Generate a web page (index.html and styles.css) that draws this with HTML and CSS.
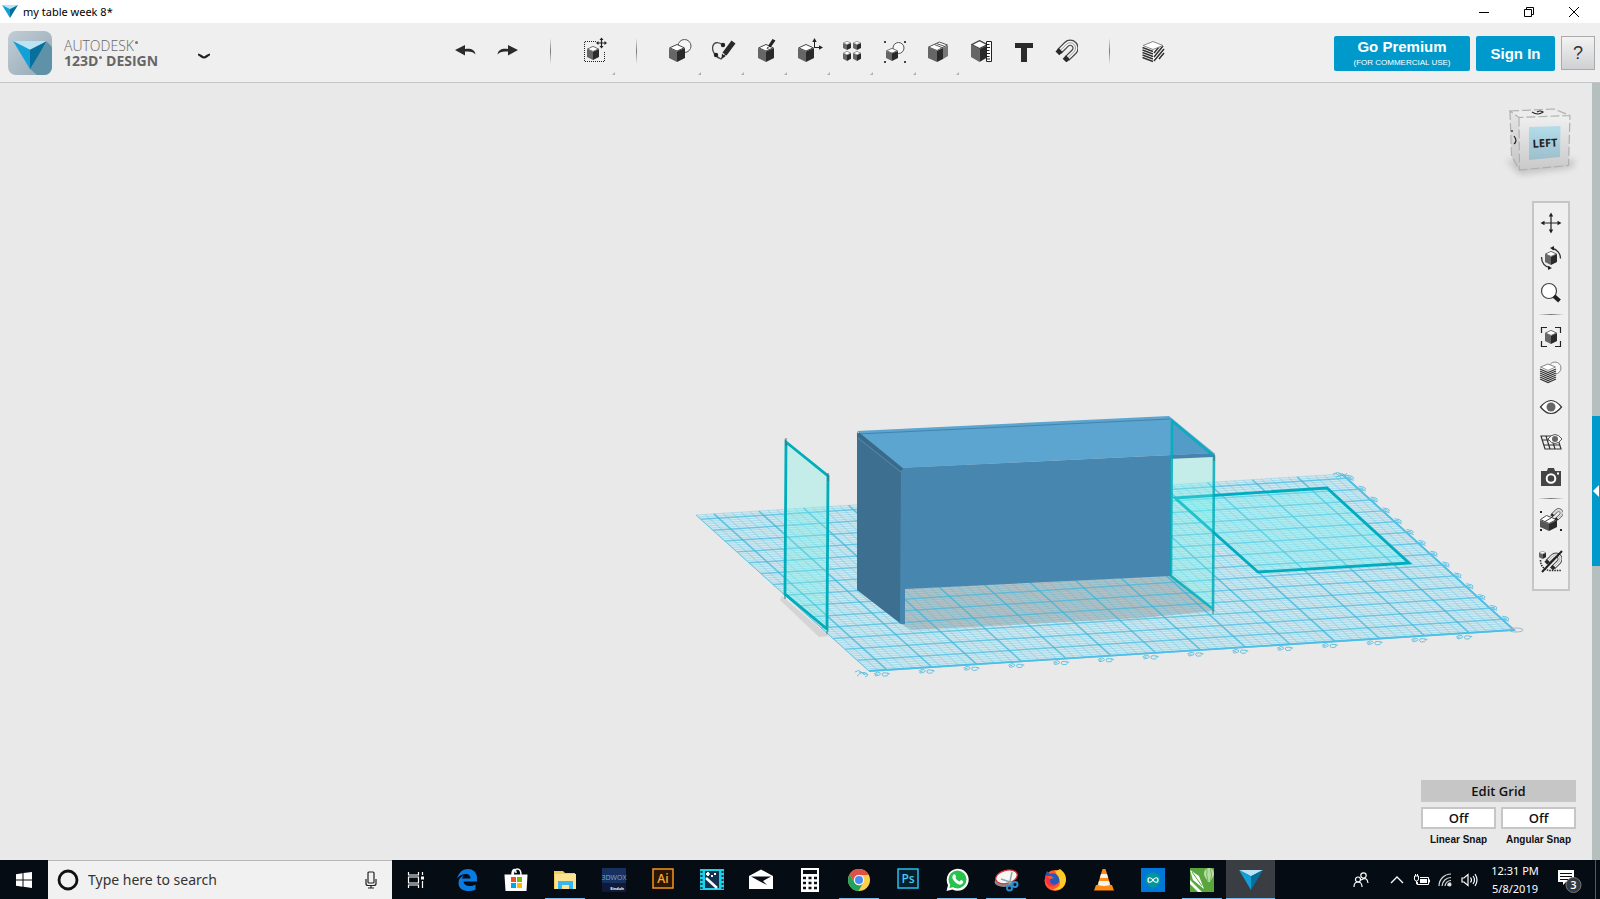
FILE: index.html
```html
<!DOCTYPE html>
<html lang="en">
<head>
<meta charset="utf-8">
<title>my table week 8*</title>
<link rel="stylesheet" href="styles.css">
</head>
<body>
<svg class="defs" aria-hidden="true">
  <defs>
    <symbol id="cube" viewBox="0 0 16 18" preserveAspectRatio="none">
      <path d="M0 4 8 7.400V18L0 14z" fill="#666"/>
      <path d="M16 4 8 7.400V18l8-4z" fill="#2a2a2a"/>
      <path d="M8 .5 15.300 3.800 8 7 .7 3.800z" fill="#fff" stroke="#444" stroke-width="1"/>
    </symbol>
    <symbol id="mark" viewBox="0 0 36 29" preserveAspectRatio="none">
      <path d="M0 0h36L18 9z" fill="#b9e4f5"/>
      <path d="M0 0 18 9v20z" fill="#12a0d8"/>
      <path d="M36 0 18 9v20z" fill="#05709c"/>
    </symbol>
    <symbol id="magnet" viewBox="0 0 24 24">
      <path d="M4.500 13 12 5.500a5.500 5.500 0 0 1 7.800 7.800L12.500 20.500" fill="none" stroke="#444" stroke-width="6.500"/>
      <path d="M4.500 13 12 5.500a5.500 5.500 0 0 1 7.800 7.800L12.500 20.500" fill="none" stroke="#f4f4f4" stroke-width="4"/>
      <path d="M4.500 13 12 5.500a5.500 5.500 0 0 1 7.800 7.800L12.500 20.500" fill="none" stroke="#999" stroke-width="1"/>
      <path d="m4 9.500 4 4-3.500 3.500-4-4zM11.500 17l4 4-3.500 3.500-4-4z" fill="#2a2a2a"/>
    </symbol>
    <linearGradient id="tile" x1="0" y1="0" x2="1" y2="1"><stop offset="0" stop-color="#c2cdd6"/><stop offset="1" stop-color="#93a8b6"/></linearGradient>
    <linearGradient id="cubeface" x1="0" y1="0" x2="0" y2="1"><stop offset="0" stop-color="#f0f0f0"/><stop offset="1" stop-color="#c9c9c9"/></linearGradient>
    <linearGradient id="cubeleft" x1="0" y1="0" x2="0" y2="1"><stop offset="0" stop-color="#e6e6e6"/><stop offset="1" stop-color="#c4c4c4"/></linearGradient>
    <linearGradient id="cubehot" x1="0" y1="0" x2="0" y2="1"><stop offset="0" stop-color="#b4dcea"/><stop offset="1" stop-color="#9cbfcb"/></linearGradient>
    <filter id="soft" x="-30%" y="-30%" width="160%" height="160%"><feGaussianBlur stdDeviation="3"/></filter>
  </defs>
</svg>

<header class="titlebar">
  <svg class="app-mark" width="16" height="13"><use href="#mark" width="16" height="13"/></svg>
  <h1>my table week 8*</h1>
  <div class="window-buttons">
    <button aria-label="Minimize"><svg width="12" height="12"><path d="M1 6.500h10" stroke="#000"/></svg></button>
    <button aria-label="Restore"><svg width="12" height="12" fill="none" stroke="#000"><path d="M1.500 3.500h7v7h-7zM3.500 3V1.500h7v7H9"/></svg></button>
    <button aria-label="Close"><svg width="12" height="12" stroke="#000"><path d="m1 1 10 10M11 1 1 11"/></svg></button>
  </div>
</header>

<div class="toolbar">
  <div class="brand">
    <svg width="44" height="44" viewBox="0 0 44 44"><rect width="44" height="44" rx="8" fill="url(#tile)"/><path d="M39 11 44 16v20a8 8 0 0 1-8 8h-7L21 37z" fill="#5f92a8"/><use href="#mark" x="5" y="10" width="34" height="28"/></svg>
    <div class="brand-name"><span>AUTODESK<i class="reg"></i></span><strong>123D<i class="reg"></i> DESIGN</strong></div>
    <button class="brand-menu" aria-label="Application menu"><svg width="14" height="7"><path d="M1 1.500c2 0 4 3 6 3s4-3 6-3" fill="none" stroke="#222" stroke-width="2.200"/></svg></button>
  </div>
  <nav class="tools" aria-label="Tools">
    <button aria-label="Undo"><svg width="32" height="32"><path d="M6 15l10-5v4c6-1 10 1 10.500 5.500-2-2.500-5-3.500-10.500-3v4z" fill="#2a2a2a"/></svg></button>
    <button aria-label="Redo"><svg width="32" height="32"><path d="M26 15l-10-5v4c-6-1-10 1-10.500 5.500 2-2.500 5-3.500 10.500-3v4z" fill="#2a2a2a"/></svg></button>
    <span class="divider"></span>
    <button class="more" aria-label="Transform"><svg width="32" height="32"><path d="M18 6.500H6.500v20h20V16" fill="none" stroke="#222" stroke-dasharray="1 1"/><use href="#cube" x="9" y="11" width="12" height="14"/><path d="M23.500 4v8M19.500 8h8" stroke="#222" stroke-width="1.200"/><path d="m23.500 2.500 2 2.500h-4zM23.500 13.500l2-2.500h-4zM18 8l2.500-2v4zM29 8l-2.500-2v4z" fill="#222"/></svg></button>
    <span class="divider"></span>
    <button class="more" aria-label="Primitives"><svg width="32" height="32"><circle cx="20.500" cy="11" r="6.500" fill="#f7f7f7" stroke="#555"/><use href="#cube" x="5" y="9" width="16" height="18"/></svg></button>
    <button class="more" aria-label="Sketch"><svg width="32" height="32"><path d="M16 10C11 6 6 7 5.500 13c0 4 3 9 8.500 11l8-8" fill="none" stroke="#444" stroke-width="1.300"/><circle cx="16" cy="10" r="2.200" fill="#222"/><circle cx="9" cy="20" r="2.200" fill="#222"/><path d="m24.500 5.500 4 3-9 12-4-3zM15 18.500l3.500 3-4 2z" fill="#2a2a2a"/></svg></button>
    <button class="more" aria-label="Construct"><svg width="32" height="32"><use href="#cube" x="8" y="9" width="16" height="18"/><path d="m22.500 4 3 1.500-5 7-2.500-1.500zM17.500 12l2 1-3 1z" fill="#222"/></svg></button>
    <button class="more" aria-label="Modify"><svg width="32" height="32"><use href="#cube" x="5" y="9" width="16" height="18"/><path d="M21.500 13V5M21 12.500h7" stroke="#222"/><path d="m21.500 3 2.200 4h-4.400zM30 12.500l-4-2.200v4.400z" fill="#222"/></svg></button>
    <button class="more" aria-label="Pattern"><svg width="32" height="32"><use href="#cube" x="7" y="6" width="8" height="9"/><use href="#cube" x="17" y="6" width="8" height="9"/><use href="#cube" x="7" y="16" width="8" height="10"/><use href="#cube" x="17" y="16" width="8" height="10"/></svg></button>
    <button class="more" aria-label="Grouping"><svg width="32" height="32"><path d="M5 6h2v2H5zM25 6h2v2h-2zM5 26h2v2H5zM25 26h2v2h-2z" fill="#444"/><circle cx="19.500" cy="13" r="5.500" fill="#f7f7f7" stroke="#555"/><use href="#cube" x="7" y="13" width="12" height="13"/></svg></button>
    <button class="more" aria-label="Combine"><svg width="32" height="32"><path d="M6 12 15 16v11l-9-4z" fill="#666"/><path d="M15 16 21 13v11l-6 3z" fill="#2a2a2a"/><path d="M21 13 26 10.500V21l-5 3z" fill="#777"/><path d="M6.500 12 17.500 7l8 3-10.500 5.500zM12.500 9.500 21 13M14.500 8.500 23 11.500" fill="#fff" stroke="#555"/></svg></button>
    <button aria-label="Measure"><svg width="32" height="32"><use href="#cube" x="6" y="5" width="17" height="22"/><path d="M21.500 6.500h5v20h-5z" fill="#fff" stroke="#222"/><path d="M22 9.500h2.500M22 12.500h3M22 15.500h2.500M22 18.500h3M22 21.500h2.500M22 24h3" stroke="#222"/></svg></button>
    <button aria-label="Text"><svg width="32" height="32"><path d="M7 8h18v5h-6v14h-6V13H7z" fill="#2a2a2a"/></svg></button>
    <button aria-label="Snap"><svg width="32" height="32"><use href="#magnet" x="4" y="4" width="23" height="23"/></svg></button>
    <span class="divider"></span>
    <button aria-label="Material"><svg width="32" height="32"><path d="M5.500 10.500 16 14.500V27L5.500 22zM26.500 10.500 16 14.500V27l10.500-5z" fill="#fff"/><path d="m5.500 12.500 10.500 4m-10.500-1.500 10.500 4m-10.500-1.500 10.500 4m-10.500-1.500 10.500 4m-10.500-1.500 10.500 4" stroke="#333" stroke-width="1.400"/><path d="m17 18 5-6m-5 10 9-11m-9 15 10-12m-5 10 5-6" stroke="#333" stroke-width="1.600"/><path d="m16 6.500 10 4-10 4-10-4z" fill="#fff" stroke="#888"/></svg></button>
  </nav>
  <div class="account">
    <button class="primary premium"><b>Go Premium</b><small>(FOR COMMERCIAL USE)</small></button>
    <button class="primary signin">Sign In</button>
    <button class="help" aria-label="Help">?</button>
  </div>
</div>

<main class="viewport">
  <svg class="scene" viewBox="0 83 1592 777" preserveAspectRatio="xMidYMid meet" role="img" aria-label="3D view of a table on the work grid">
    <path d="M696 515 1342 474 1514 630 869 671z" fill="#cbe7f0" fill-opacity=".85"/>
    <path d="M782 596 829 636 819 637 780 600z" fill="#999" fill-opacity=".25"/>
    <path d="M899 623 905 586 1171 575 1213 611 1140 618 912 630z" fill="#999" fill-opacity=".5"/>
    <g id="grid" fill="none" stroke="#35b4dc"></g>
    <path d="M696 515 869 671" stroke="#6cc6e4" stroke-width="1"/>
    <path d="M869 671 1514 630 1342 474" fill="none" stroke="#4dbfe6" stroke-width="1.800"/>
    <g id="labels" fill="none" stroke="#62c3e4" stroke-width="1"></g>
    <ellipse cx="1516" cy="630" rx="7" ry="2" fill="none" stroke="#9fb7c4"/>
    <path d="M1175 498 1327 488 1409 563 1258 572z" fill="#70f4f2" fill-opacity=".3" stroke="#00acc0" stroke-width="2.800"/>
    <path d="M857 432 901 468V624L857 590z" fill="#3d6f90"/>
    <path d="M901 468 1171 456V576L905 589V624H900z" fill="#4787af"/>
    <path d="M857 431 1169 416 1214 453 901 468z" fill="#5ba5d0"/>
    <path d="M901 468 1213 453V457L901 471z" fill="#4787af"/>
    <path d="M858 434 1170 419" stroke="#4384ad" stroke-width="1"/>
    <path d="M858 434 902 470" stroke="#396a8a" stroke-width="4"/>
    <path d="M858 438 901 472" stroke="#6395b3" stroke-width=".7"/>
    <path d="M1171 459 1213 457V610L1171 576z" fill="#70f4e8" fill-opacity=".3"/>
    <path d="M1172 421 1213 455V457L1172 459z" fill="#3a7aa8" fill-opacity=".2"/>
    <path d="M1172 421 1214 456 1213 609 1171 576z" fill="none" stroke="#00adba" stroke-opacity=".85" stroke-width="2.600"/>
    <path d="M786 442 828 476 827 629 785 594z" fill="#70f4e8" fill-opacity=".3" stroke="#00adba" stroke-width="2.800"/>
    <path d="M786 438v8M828 473v8M785 595v4M827 631v3M1214 453v8M1213 610v4" stroke="#4c6b70" stroke-width="1"/>
  </svg>

  <svg class="view-cube" width="90" height="90" viewBox="1495 98 90 90" role="img" aria-label="View cube">
    <path d="M1506 160 1520 175 1572 168 1576 160z" fill="#999" opacity=".45" filter="url(#soft)"/>
    <path d="M1510 111 1519 117.500 1519.500 170 1511.500 156z" fill="url(#cubeleft)"/>
    <path d="M1510 111 1554 109 1570 115.500 1519 117.500z" fill="#ececec"/>
    <path d="M1519 117.500 1570 115.500 1568.500 165.500 1519.500 170z" fill="url(#cubeface)"/>
    <path d="M1510 111 1554 109 1570 115.500 1519 117.500zM1510 111 1511.500 156 1519.500 170 1568.500 165.500 1570 115.500M1519 117.500 1519.500 170" fill="none" stroke="#b0b0b0" stroke-width="1.200" stroke-dasharray="9 3"/>
    <path d="M1529 127 1560.500 126 1560 157 1529 160z" fill="url(#cubehot)"/>
    <path d="M1532 112q6 4 11 0q-3-2-6 0M1514 136q4 5 0 8M1512 130v2" fill="none" stroke="#222" stroke-width="1.200"/>
    <text class="cube-label" x="1545" y="147" text-anchor="middle" transform="rotate(-3 1545 143)">LEFT</text>
  </svg>

  <nav class="view-tools" aria-label="View">
    <button aria-label="Pan"><svg width="24" height="24"><path d="M12 3v18M3 12h18" stroke="#222" stroke-width="1.200"/><path d="m12 1.500 2.200 4H9.800zM12 22.500l2.200-4H9.800zM1.500 12l4-2.200v4.400zM22.500 12l-4-2.200v4.400z" fill="#222"/></svg></button>
    <button aria-label="Orbit"><svg width="24" height="24"><use href="#cube" x="6" y="5" width="12" height="14"/><path d="M13 2.500c5 .5 8.500 5 8.500 10M11 21.500C6 21 2.500 17 2.500 11" fill="none" stroke="#333" stroke-width="1.300"/><path d="M11 2l4-2v4.500zM13 22l-4-2v4z" fill="#222"/></svg></button>
    <button aria-label="Zoom"><svg width="24" height="24"><circle cx="10" cy="10" r="7.500" fill="#fff" stroke="#444" stroke-width="1.200"/><path d="m15 15 5.500 5" stroke="#222" stroke-width="4"/></svg></button>
    <hr>
    <button aria-label="Fit"><svg width="24" height="24"><path d="M2.500 8V2.500H8M16 2.500h5.500V8M21.500 16v5.500H16M8 21.500H2.500V16" fill="none" stroke="#222" stroke-width="1.200"/><use href="#cube" x="6" y="5" width="12" height="14"/></svg></button>
    <button aria-label="Render style"><svg width="24" height="24"><circle cx="16" cy="8" r="6" fill="#f7f7f7" stroke="#888"/><path d="M1 8 9 4l8 3.500V18l-8 4-8-4z" fill="#fff"/><path d="m1 9 8 3.500L17 9M1 11l8 3.500 8-3.500M1 13l8 3.500 8-3.500M1 15l8 3.500 8-3.500M1 17l8 3.500 8-3.500M1 19l8 3.500 8-3.500" fill="none" stroke="#333" stroke-width="1.200"/><path d="m9 4 7.500 3L9 10.500 1.500 7z" fill="#fff" stroke="#888"/></svg></button>
    <button aria-label="Visibility"><svg width="24" height="24"><path d="M1.500 12Q12-1 22.500 12 12 25 1.500 12z" fill="#fff" stroke="#333" stroke-width="1.200"/><circle cx="12" cy="12" r="4.500" fill="#666"/></svg></button>
    <button aria-label="Grid visibility"><svg width="24" height="24"><path d="M2 6h16l4 13H6zM3 10h16M5 15h16M7 6l4 13M12 6l4 13" fill="none" stroke="#333" stroke-width="1.200"/><path d="M9 9q7-9 14 0-7 9-14 0z" fill="#fff" stroke="#555"/><circle cx="16" cy="9" r="3" fill="#666"/></svg></button>
    <button aria-label="Snapshot"><svg width="24" height="24"><path d="M2 6h6l1-3h6l1 3h6v15H2z" fill="#444"/><circle cx="12" cy="13.500" r="4.300" fill="none" stroke="#fff" stroke-width="2"/><path d="M18 7.500h2v2h-2z" fill="#fff"/></svg></button>
    <hr>
    <button aria-label="Object snap"><svg width="24" height="24"><path d="M1 11 10 15v7L1 18z" fill="#555"/><path d="m10 15 8-4v7l-8 4z" fill="#2a2a2a"/><path d="m1.500 10.500 6-4 10 4-7.500 4zM6 12.500l6-3.500" fill="#fff" stroke="#444"/><path d="M1 2h2v2H1zM1 20h2v2H1zM21 20h2v2h-2z" fill="#222"/><use href="#magnet" x="11" y="-1" width="13" height="13"/></svg></button>
    <button aria-label="Smart snap off"><svg width="24" height="24"><use href="#cube" x="0" y="2" width="7" height="8"/><path d="M1.500 11c0 7 5 11 11 10.500h10" fill="none" stroke="#222" stroke-width="1.500" stroke-dasharray="1.500 1"/><use href="#magnet" x="5" y="3" width="18" height="18"/><path d="M3 23 23 2" stroke="#222" stroke-width="2"/></svg></button>
  </nav>

  <section class="snap-panel" aria-label="Grid and snap">
    <button class="edit-grid">Edit Grid</button>
    <div class="snap"><button id="linear" aria-describedby="linear-name">Off</button><span id="linear-name">Linear Snap</span></div>
    <div class="snap"><button id="angular" aria-describedby="angular-name">Off</button><span id="angular-name">Angular Snap</span></div>
  </section>

  <aside class="edge"><button aria-label="Open side panel"><svg width="6" height="12"><path d="M6 0v12L0 6z" fill="#fff"/></svg></button></aside>
</main>

<footer class="taskbar">
  <button class="start" aria-label="Start"><svg width="16" height="16" fill="#fff"><path d="M0 2.200 6.500 1.300V7.500H0zM7.500 1.100 16 0v7.500H7.500zM0 8.500h6.500v6.200L0 13.800zM7.500 8.500H16V16l-8.500-1.200z"/></svg></button>
  <label class="search">
    <svg width="22" height="22"><circle cx="11" cy="11" r="9" fill="none" stroke="#111" stroke-width="2.800"/></svg>
    <input type="text" placeholder="Type here to search" aria-label="Search">
    <svg width="12" height="18" fill="none" stroke="#222" stroke-width="1.200"><rect x="3" y="1" width="6" height="11" rx="1"/><path d="M1 8v4.500q0 2 2 2h6q2 0 2-2V8M6 15v2.500M3 17h6"/></svg>
  </label>
  <button class="task-view" aria-label="Task view"><svg width="16" height="16" fill="none" stroke="#fff" stroke-width="1.200"><path d="M.5 0v3h10V0M.5 16v-3h10v3M.5 5h10v6H.5zM14.500 0v3M14.500 9v7"/><path d="M13 4.500h3v3h-3z" fill="#fff" stroke="none"/></svg></button>
  <div class="apps">
    <button aria-label="Edge"><svg width="24" height="24"><path d="M2 10.500C4 4 8 1 13 1c6 0 9 4.500 9 9v3.500H8.500c.3 4.500 7 6 12 3v5c-6 3-17 2-17-6.500 0-4 2-6 5-7.500-.8 1-1.300 2-1.400 3h8.400c0-6.500-9.500-5.500-13.500 0z" fill="#0a7be0"/></svg></button>
    <button aria-label="Store"><svg width="24" height="24"><path d="M.5 6.500h23L22.500 23h-21z" fill="#fff"/><path d="M8 7C8 0 12 0 12 5M9 7c1-8 8-8 8 0" fill="none" stroke="#fff" stroke-width="1.500"/><path d="M7 9h5v5H7z" fill="#f25022"/><path d="M13 9h5v5h-5z" fill="#7fba00"/><path d="M7 15h5v5H7z" fill="#00a4ef"/><path d="M13 15h5v5h-5z" fill="#ffb900"/></svg></button>
    <button class="open" aria-label="File Explorer"><svg width="24" height="24"><path d="M1 3h9l2 2h10v16H1z" fill="#f3cd5c"/><path d="M2 6h21v15H2z" fill="#fde292"/><path d="M5 13h15v8h-4v-4H9v4H5z" fill="#38b6ef"/></svg></button>
    <button aria-label="3DWOX"><svg width="24" height="24"><path d="M0 0h24v24H0z" fill="#16305f"/><path d="M0 15h24v9H0z" fill="#101a38"/><text class="ico-tiny" x="12" y="12" text-anchor="middle" fill="#7fa9cf">3DWOX</text><text class="ico-mini" x="22" y="22" text-anchor="end" fill="#fff">Sindoh</text></svg></button>
    <button aria-label="Illustrator"><svg width="24" height="24"><path d="M2 1h20v19H2z" fill="#2b1600" stroke="#f79421" stroke-width="1.500"/><text class="ico-text" x="12" y="15" text-anchor="middle" fill="#ffa733">Ai</text></svg></button>
    <button aria-label="Video editor"><svg width="24" height="24"><path d="M0 1h24v21H0z" fill="#18d5ea"/><path d="M5 3h14v17H5z" fill="#14304f"/><path d="M1.500 3v18M22.500 3v18" stroke="#14304f" stroke-width="2" stroke-dasharray="2 2"/><path d="m6 10 11 10" stroke="#fff" stroke-width="2.500"/><path d="m8 4 1.500 2L8 8 6 6zM15 5l1 1-1 1-1-1zM12 7l1 1-1 1-1-1z" fill="#fff" stroke="#fff"/></svg></button>
    <button aria-label="Mail"><svg width="24" height="24"><path d="M0 8 12 1.500 24 8v13H0z" fill="#fff"/><path d="M2 8.500h20L14 13l4 4-7-3.500z" fill="#090e16"/></svg></button>
    <button aria-label="Calculator"><svg width="24" height="24"><path d="M3 0h18v24H3z" fill="#fff"/><path d="M5 2h14v4H5z" fill="#090e16"/><path d="M5 10h15M5 15h15M5 20h15" stroke="#090e16" stroke-width="2.500" stroke-dasharray="3 2.500"/></svg></button>
    <button class="open" aria-label="Chrome"><svg width="24" height="24"><circle cx="12" cy="12" r="11" fill="#fcd04b"/><path d="M2.500 6.500A11 11 0 0 1 21.700 7H12a5 5 0 0 0-4.500 7.500z" fill="#df5144"/><path d="M2.500 6.500A11 11 0 0 0 11.500 23l4.500-8a5 5 0 0 1-8.500-.5z" fill="#1da362"/><circle cx="12" cy="12" r="5.200" fill="#f4f4f4"/><circle cx="12" cy="12" r="4" fill="#4c8bf5"/></svg></button>
    <button aria-label="Photoshop"><svg width="24" height="24"><path d="M2 1h20v19H2z" fill="#04202d" stroke="#26bff0" stroke-width="1.500"/><text class="ico-text" x="12" y="15" text-anchor="middle" fill="#4cc9f5">Ps</text></svg></button>
    <button class="open" aria-label="WhatsApp"><svg width="24" height="24"><path d="M1.500 23 3 17A11 11 0 1 1 7.500 21.500z" fill="#fff"/><circle cx="12.500" cy="11.500" r="9" fill="#27c24c"/><path d="M4.500 20 5.500 15l3.500 4z" fill="#27c24c"/><path d="M8.500 6.500q2-1 2.500 2l-.5 1.500q1.500 3 4 3.500l1.500-1.500q3 .5 2 3-3 4-8-1-4.500-4.500-1.500-7.500z" fill="#fff"/></svg></button>
    <button class="open" aria-label="Snipping Tool"><svg width="24" height="24"><ellipse cx="10" cy="14" rx="9.500" ry="5" fill="#888"/><ellipse cx="12.500" cy="9" rx="11" ry="6.500" fill="#f7f7f7" stroke="#d33" stroke-width="1.200" transform="rotate(-15 12 9)"/><path d="m7 11 12 4M18 4l-3 14" stroke="#8aa" stroke-width="1.500"/><circle cx="15.500" cy="20" r="2.500" fill="none" stroke="#2b8fd4" stroke-width="2"/><circle cx="21" cy="16.500" r="2.500" fill="none" stroke="#2b8fd4" stroke-width="2"/></svg></button>
    <button aria-label="Firefox"><svg width="24" height="24"><circle cx="12" cy="12.500" r="10.500" fill="#ff5a2b"/><path d="M12 3q4-1 5-2c6 4 8 11 4 17-3 4-9 5-12 3 8 0 10-7 6-12z" fill="#ffc928"/><path d="M2 8 4 3l3 3q5-2 8 2c3 5 0 9-4 9-3 0-6-2-4-6l4-1-3-2z" fill="#2358bd"/><path d="M2 8q3 0 5 3c-1 4 3 7 7 5-1 3-9 4-11-2z" fill="#ff2e45"/></svg></button>
    <button aria-label="VLC"><svg width="24" height="24"><path d="M4 17h16l2 5.500H2z" fill="#ff8a12"/><path d="M10.500 1h3L19 19q-7 3-14 0z" fill="#ff8a12"/><path d="m9 6-1.200 4h8.400L15 6zM7 13l-1 4q6 2 12 0l-1-4z" fill="#f3f3f3"/></svg></button>
    <button aria-label="Arduino"><svg width="24" height="24"><path d="M0 0h24v24H0z" fill="#0078d7"/><circle cx="12" cy="12" r="7.500" fill="#00979c"/><path d="M12 12c-2-3-5-3-5 0s3 3 5 0 5-3 5 0-3 3-5 0z" fill="none" stroke="#fff" stroke-width="1.200"/></svg></button>
    <button class="open" aria-label="CorelDRAW"><svg width="24" height="24"><path d="M0 0h24v24H0z" fill="#58a63c"/><path d="M14 6c0-8 10-8 10 0 0 3-3 5-4 8h-2c-1-3-4-5-4-8z" fill="#b8dca4"/><path d="M17 1q-1 6 1 12M20.500 1q2 6 0 12" stroke="#72b858" fill="none"/><path d="M0 2 9 8l5 13-11-9z" fill="#fff"/><path d="m2 4 10 14" stroke="#58a63c"/><path d="M0 12 12 24H8l-8-8z" fill="#fff"/></svg></button>
    <button class="open active" aria-label="123D Design"><svg width="24" height="24"><use href="#mark" y="2" width="24" height="20"/></svg></button>
  </div>
  <div class="tray">
    <button class="people" aria-label="People"><svg width="16" height="16" fill="none" stroke="#fff" stroke-width="1.200"><circle cx="10.500" cy="3.500" r="2.700"/><circle cx="5" cy="7.500" r="2.500"/><path d="M1 15q0-5 4-5t4 5M8 8q6-4 7 3"/></svg></button>
    <button aria-label="Show hidden icons"><svg width="14" height="9"><path d="m1 8 6-6 6 6" fill="none" stroke="#fff" stroke-width="1.300"/></svg></button>
    <button aria-label="Battery"><svg width="17" height="14" fill="none" stroke="#fff"><path d="M7 4.500h8.500v7h-11V9M16.500 6.500v3M1.500 3v3q0 2 2 2t2-2V3zM2.500 3V1M4.500 3V1M3.500 8v3h1"/><path d="M7 6h7v4H7z" fill="#fff" stroke="none"/></svg></button>
    <button aria-label="Network"><svg width="14" height="14" fill="none" stroke="#ddd" stroke-width="1.200"><path d="M1 13A12 12 0 0 1 13 1M4 13A9 9 0 0 1 13 4.500M7 13A6 6 0 0 1 13 7.500M10 13a3 3 0 0 1 3-3"/><circle cx="11.500" cy="11.500" r="1.500" fill="#fff"/></svg></button>
    <button aria-label="Volume"><svg width="17" height="14" fill="none" stroke="#fff" stroke-width="1.200"><path d="M1 5h2l4-3.500v11L3 9H1zM9.500 4.500q2 2.500 0 5M12 3q3 4 0 8M14 1q4 6 0 12"/></svg></button>
    <time class="clock" datetime="2019-05-08T12:31"><span>12:31 PM</span><span>5/8/2019</span></time>
    <button class="notes" aria-label="Notifications, 3 new"><svg width="26" height="26" viewBox="0 0 26 26"><path d="M1 2h16v12H9l-3 3v-3H1z" fill="#fff"/><path d="M3 5.500h12M3 8.500h12M3 11.500h8" stroke="#090e16"/><circle cx="16.500" cy="17" r="7.500" fill="#333a41" stroke="#777"/><text class="badge" x="16.500" y="21" text-anchor="middle" fill="#fff">3</text></svg></button>
  </div>
</footer>
<script src="grid.js"></script>
</body>
</html>
```
FILE: styles.css
```css
* { box-sizing: border-box; }
body {
  margin: 0;
  height: 100vh;
  display: flex;
  flex-direction: column;
  overflow: hidden;
  font-family: "Liberation Sans", sans-serif;
  background: #e9e9e9;
}
button {
  border: 0;
  padding: 0;
  background: none;
  font: inherit;
  color: inherit;
  display: flex;
  align-items: center;
  justify-content: center;
}
svg { display: block; overflow: visible; }
.defs { position: absolute; width: 0; height: 0; }

.titlebar {
  flex: none;
  height: 23px;
  padding: 0 2px;
  display: flex;
  align-items: center;
  gap: 5px;
  background: #fff;
}
.titlebar h1 {
  margin: 0;
  font: 400 11px/20px "Noto Sans", sans-serif;
  color: #000;
}
.window-buttons { margin-left: auto; display: flex; height: 20px; }
.window-buttons button { width: 45px; padding-right: 4px; }

.toolbar {
  flex: none;
  height: 60px;
  padding: 0 5px 0 8px;
  display: grid;
  grid-template-columns: 1fr auto 1fr;
  background: #efefef;
  border-bottom: 1px solid #c5c5c5;
}
.brand { display: flex; align-items: center; }
.brand-name {
  margin-left: 12px;
  display: flex;
  flex-direction: column;
  font: 14px/15px "Open Sans", sans-serif;
  color: #666;
}
.brand-name span { font-weight: 300; }
.brand-name strong { font-weight: 700; }
.reg {
  display: inline-block;
  width: 3px;
  height: 3px;
  margin-left: 1px;
  vertical-align: 7px;
  border-radius: 50%;
  background: #777;
}
.brand-menu { width: 28px; height: 24px; margin: 8px 0 0 32px; }
.tools { display: flex; margin-left: 15px; }
.tools button, .divider { width: 43px; position: relative; }
.tools button { padding-bottom: 4px; }
.more::after {
  content: "";
  position: absolute;
  right: 1px;
  bottom: 7px;
  border-bottom: 3px solid #b0b0b0;
  border-left: 3px solid transparent;
}
.divider::before {
  content: "";
  position: absolute;
  left: 20px;
  top: 15px;
  width: 1px;
  height: 26px;
  background: linear-gradient(#efefef, #777, #efefef);
}
.account {
  display: flex;
  justify-content: flex-end;
  align-items: flex-start;
  gap: 6px;
  padding-top: 13px;
}
.primary {
  height: 35px;
  border-radius: 2px;
  background: #0099cc;
  color: #fff;
  font-weight: 700;
  font-size: 15px;
}
.premium { width: 136px; flex-direction: column; }
.premium b { line-height: 18px; }
.premium small { font-size: 8px; line-height: 14px; font-weight: 400; }
.signin { width: 79px; }
.help {
  width: 34px;
  height: 34px;
  border: 1px solid #aaa;
  background: linear-gradient(#f3f3f3, #cfd0d2);
  font-size: 18px;
  color: #333;
}

.viewport { flex: 1; min-height: 0; position: relative; background: #e9e9e9; }
.scene { position: absolute; left: 0; top: 0; width: calc(100% - 8px); height: 100%; }
.view-cube { position: absolute; right: 15px; top: 15px; }
.cube-label { font: 700 11px "Open Sans", sans-serif; fill: #222; }
.view-tools {
  position: absolute;
  top: 118px;
  right: 30px;
  width: 38px;
  padding: 2px 0 5px;
  display: flex;
  flex-direction: column;
  align-items: center;
  border: 2px solid #c6c6c6;
  background: #efefef;
}
.view-tools button { width: 34px; height: 35px; }
.view-tools hr {
  width: 26px;
  height: 1px;
  margin: 4px 0;
  border: 0;
  background: linear-gradient(90deg, #efefef, #777, #efefef);
}
.view-tools button:last-child { height: 46px; }
.snap-panel {
  position: absolute;
  right: 24px;
  bottom: 14px;
  width: 155px;
  display: grid;
  grid-template-columns: 1fr 1fr;
  gap: 5px;
  font: 600 13px/18px "Open Sans", sans-serif;
  color: #111;
}
.edit-grid { grid-column: 1 / -1; height: 22px; background: #c6c6c6; }
.snap { display: flex; flex-direction: column; align-items: center; gap: 4px; }
.snap button { width: 100%; height: 22px; border: 2px solid #c6c6c6; background: #fff; }
.snap span { font: 700 10px/13px "Liberation Sans", sans-serif; white-space: nowrap; }
.edge { position: absolute; top: 0; right: 0; bottom: 0; width: 8px; background: #b5bfbd; }
.edge button { margin-top: 333px; width: 8px; height: 150px; background: #0099cc; }

.taskbar {
  flex: none;
  height: 39px;
  display: flex;
  background: #060c14;
  color: #fff;
  font-family: "Open Sans", sans-serif;
}
.start, .task-view { width: 48px; }
.search {
  width: 344px;
  padding: 0 15px 0 9px;
  display: flex;
  align-items: center;
  background: #f1f1f1;
  border-top: 1px solid #b8b8b8;
}
.search input {
  flex: 1;
  min-width: 0;
  margin-left: 9px;
  padding: 0;
  border: 0;
  outline: 0;
  background: none;
  font: 14px/20px "Noto Sans", sans-serif;
}
.search input::placeholder { color: #333; opacity: 1; }
.apps { display: flex; margin-left: 2px; }
.apps button { width: 49px; position: relative; }
.apps .active { background: #3a3e43; }
.open::after {
  content: "";
  position: absolute;
  left: 5px;
  right: 4px;
  bottom: 0;
  height: 1px;
  background: #76b9ed;
}
.active::after { left: 0; right: 0; }
.ico-text { font: 600 12px "Open Sans", sans-serif; }
.ico-tiny { font: 7px "Open Sans", sans-serif; }
.ico-mini { font: 700 4px "Open Sans", sans-serif; }
.tray { margin-left: auto; display: flex; align-items: stretch; padding-right: 4px; }
.tray button { width: 24px; }
.tray .people { width: 48px; }
.clock {
  width: 68px;
  display: flex;
  flex-direction: column;
  justify-content: center;
  align-items: center;
  font: 11px/18px "Noto Sans", sans-serif;
}
.tray .notes { width: 47px; padding: 3px 4px 0 0; border-right: 1px solid #555a60; }
.badge { font: 600 11px "Open Sans", sans-serif; }
```
FILE: grid.js
```js
// Work plane corners: origin, along the front edge, far corner, along the side edge.
const p0 = [1514, 630], p1 = [869, 671], p2 = [696, 515], p3 = [1342, 474];

// Projective map from the unit square to the plane's quad.
const sx = p0[0] - p1[0] + p2[0] - p3[0], sy = p0[1] - p1[1] + p2[1] - p3[1];
const dx1 = p1[0] - p2[0], dy1 = p1[1] - p2[1], dx2 = p3[0] - p2[0], dy2 = p3[1] - p2[1];
const det = dx1 * dy2 - dx2 * dy1;
const g = (sx * dy2 - dx2 * sy) / det, h = (dx1 * sy - sx * dy1) / det;
const project = (u, v) => {
  const w = g * u + h * v + 1;
  return [
    ((p1[0] - p0[0] + g * p1[0]) * u + (p3[0] - p0[0] + h * p3[0]) * v + p0[0]) / w,
    ((p1[1] - p0[1] + g * p1[1]) * u + (p3[1] - p0[1] + h * p3[1]) * v + p0[1]) / w
  ];
};
const add = (parent, d, opacity, width) => {
  const path = document.createElementNS("http://www.w3.org/2000/svg", "path");
  path.setAttribute("d", d);
  if (opacity) path.setAttribute("stroke-opacity", opacity);
  if (width) path.setAttribute("stroke-width", width);
  parent.append(path);
};
const grid = document.getElementById("grid"), labels = document.getElementById("labels");
const cells = 72;
for (let i = 0; i <= cells; i++) {
  const t = i / cells, major = i % 5 === 0;
  add(grid, `M${project(t, 0)}L${project(t, 1)}`, major ? 0.7 : 0.38, major ? 1.5 : 0.9);
  add(grid, `M${project(0, t)}L${project(1, t)}`, major ? 0.65 : 0.32, major ? 1.5 : 0.8);
  if (major && i) {
    const [x, y] = project(t, 0), [a, b] = project(0, t);
    add(labels, `M${x - 13} ${y + 4}q4-3 6-1t-4 3q-3-1 2-2m4 1q0-3 4-2t1 3q-4 1-5-1m5-2l3 1`);
    add(labels, `M${a - 3} ${b - 1}l7 0q2 2-3 2m-1-4l5 1q3 1 1 3m-5-1l6 2`);
  }
}
add(labels, "M855 672q4-3 6 0t6 2m-10 2q5-5 9-3t-1 4m-6-5q4 0 6 3M1333 474q5-3 8 0t6-1m-11 4q5-3 10-1m-7-3l9 6m-12-6l6 6m-2-5l9 2");
```
